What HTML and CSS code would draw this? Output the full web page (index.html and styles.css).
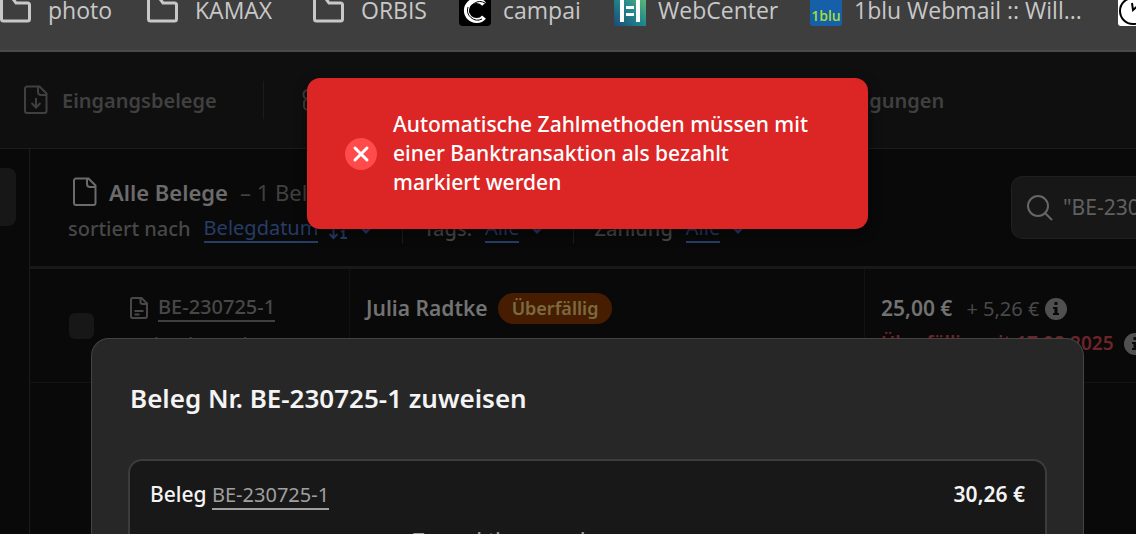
FILE: index.html
```html
<!DOCTYPE html>
<html lang="de">
  <head>
    <meta charset="UTF-8" />
    <meta name="viewport" content="width=device-width, initial-scale=1.0" />
    <title>Alle Belege</title>
    <link rel="stylesheet" href="styles.css">
  </head>
  <body>
    <nav class="bookmarks">
      <a class="bookmark" href="#">
        <svg class="folder" viewBox="0 0 32 28"><path d="M1.5 1.5V23a2 2 0 0 0 2 2h24a2 2 0 0 0 2-2V9a2 2 0 0 0-2-2H16l-4-5.5z" /></svg>
        photo
      </a>
      <a class="bookmark" href="#">
        <svg class="folder" viewBox="0 0 32 28"><path d="M1.5 1.5V23a2 2 0 0 0 2 2h24a2 2 0 0 0 2-2V9a2 2 0 0 0-2-2H16l-4-5.5z" /></svg>
        KAMAX
      </a>
      <a class="bookmark" href="#">
        <svg class="folder" viewBox="0 0 32 28"><path d="M1.5 1.5V23a2 2 0 0 0 2 2h24a2 2 0 0 0 2-2V9a2 2 0 0 0-2-2H16l-4-5.5z" /></svg>
        ORBIS
      </a>
      <a class="bookmark site" href="#">
        <svg class="favicon" viewBox="0 0 32 32">
          <rect width="32" height="32" rx="4" fill="#000" />
          <path d="M25 10a10 10 0 1 0 0 13" fill="none" stroke="#fff" stroke-width="5" />
          <path d="M26 9a10 10 0 0 0-15 10M9 13a10 10 0 0 0 14 12" fill="none" stroke="#000" stroke-width="1" />
        </svg>
        campai
      </a>
      <a class="bookmark site" href="#">
        <svg class="favicon" viewBox="0 0 32 32">
          <defs>
            <linearGradient id="teal" x1="0" y1="1" x2="1" y2="0">
              <stop offset="0" stop-color="#1d4a78" />
              <stop offset="0.5" stop-color="#20888c" />
              <stop offset="1" stop-color="#6cc070" />
            </linearGradient>
          </defs>
          <rect width="32" height="32" fill="url(#teal)" />
          <path d="M6 4h4v24H6zM22 4h4v24h-4zM12 12h8v3h-8zM12 19h8v3h-8z" fill="#fff" />
        </svg>
        WebCenter
      </a>
      <a class="bookmark site" href="#">
        <span class="favicon blu">1blu</span>
        1blu Webmail :: Will...
      </a>
      <a class="bookmark site" href="#" aria-label="Uhr">
        <svg class="favicon" viewBox="0 0 32 32">
          <rect width="32" height="32" rx="3" fill="#fff" />
          <circle cx="15" cy="17" r="13" fill="none" stroke="#000" stroke-width="2" />
          <path d="M14 9l1 7 7-6" fill="none" stroke="#000" stroke-width="2" />
        </svg>
      </a>
    </nav>

    <div class="app">
      <nav class="tabs">
        <a class="tab" href="#">
          <svg class="doc" viewBox="0 0 24 30"><path d="M3 1.5h12.5l7 7V26a2 2 0 0 1-2 2H3a2 2 0 0 1-2-2V3.5a2 2 0 0 1 2-2zM14 1.5V7a3 3 0 0 0 3 3h5.5M12 13v9M7.500 18l4.5 4.5 4.5-4.5" /></svg>
          Eingangsbelege
        </a>
        <a class="tab" href="#">
          <svg class="doc" viewBox="0 0 24 30"><path d="M6 5h12a4 4 0 0 1 0 9H6a4 4 0 0 1 0-9zM6 14a4 4 0 0 0-4 4v3a4 4 0 0 0 4 4h12a4 4 0 0 0 4-4v-3" /></svg>
          Ausgangsbelege
        </a>
        <a class="tab wide" href="#">Bescheinigungen</a>
      </nav>

      <div class="content">
        <aside class="sidebar">
          <div class="sidebar-item"></div>
        </aside>

        <main class="main">
          <header class="list-header">
            <div class="list-info">
              <h1 class="list-title">
                <svg class="doc" viewBox="0 0 24 30"><path d="M3 1.5h12.5l7 7V26a2 2 0 0 1-2 2H3a2 2 0 0 1-2-2V3.5a2 2 0 0 1 2-2zM14 1.5V7a3 3 0 0 0 3 3h5.5" /></svg>
                <span>Alle Belege</span>
                <span class="count">– 1 Beleg</span>
              </h1>
              <div class="filters">
                <div class="filter">
                  sortiert nach
                  <a class="filter-link" href="#">Belegdatum</a>
                  <svg class="sort-icon" viewBox="0 0 20 24"><path d="M5.5 6v15M1.5 17l4 4 4-4M13 15l2.5-1.5V21M12.5 21H19" /></svg>
                  <svg class="chevron" viewBox="0 0 16 14"><path d="M3 5l5 5 5-5" /></svg>
                </div>
                <div class="filter">
                  Tags:
                  <a class="filter-link" href="#">Alle</a>
                  <svg class="chevron" viewBox="0 0 16 14"><path d="M3 5l5 5 5-5" /></svg>
                </div>
                <div class="filter">
                  Zahlung
                  <a class="filter-link" href="#">Alle</a>
                  <svg class="chevron" viewBox="0 0 16 14"><path d="M3 5l5 5 5-5" /></svg>
                </div>
              </div>
            </div>
            <label class="search">
              <svg class="search-icon" viewBox="0 0 28 28"><circle cx="12" cy="12" r="10" /><path d="M19 19l7 7" /></svg>
              <input class="search-input" type="text" aria-label="Suche" value="&quot;BE-230725-1&quot;" />
            </label>
          </header>

          <div class="row">
            <div class="cell cell-doc">
              <input class="check" type="checkbox" aria-label="Beleg auswählen" />
              <div class="doc-info">
                <div class="line">
                  <svg class="doc-small" viewBox="0 0 18 22"><path d="M2.5 1h9l5.5 5.5V19a2 2 0 0 1-2 2H2.5A1.5 1.5 0 0 1 1 19.5v-17A1.5 1.5 0 0 1 2.5 1zM10.5 1v4a2 2 0 0 0 2 2H17M4.5 14h9M4.5 17.5h5" /></svg>
                  <a class="doc-link" href="#">BE-230725-1</a>
                </div>
                <div class="line sub">Rebuchung bar</div>
              </div>
            </div>
            <div class="cell cell-name">
              <div class="line">
                <strong>Julia Radtke</strong>
                <span class="badge">Überfällig</span>
              </div>
              <div class="line sub">zugewiesen an Vorstand, neue Fälligkeit</div>
            </div>
            <div class="cell cell-amount">
              <div class="line">
                <strong>25,00 €</strong>
                <span class="fee">+ 5,26 €
                  <svg class="info" viewBox="0 0 22 22"><circle cx="11" cy="11" r="11" /><path d="M9.5 4h3v3h-3zM8 9h4.5v6H14v2H8v-2h1.5v-4H8z" /></svg>
                </span>
              </div>
              <div class="line overdue">
                Überfällig seit 17.08.2025
                <svg class="info" viewBox="0 0 22 22"><circle cx="11" cy="11" r="11" /><path d="M9.5 4h3v3h-3zM8 9h4.5v6H14v2H8v-2h1.5v-4H8z" /></svg>
              </div>
            </div>
          </div>
        </main>
      </div>
    </div>

    <section class="modal" role="dialog" aria-labelledby="modalTitle">
      <h2 class="modal-title" id="modalTitle">Beleg Nr. BE-230725-1 zuweisen</h2>
      <div class="card">
        <div class="card-head">
          <span>Beleg <a class="card-link" href="#">BE-230725-1</a></span>
          <strong>30,26 €</strong>
        </div>
        <p class="card-note">Transaktion zuordnen</p>
      </div>
    </section>

    <div class="toast" role="alert">
      <svg class="toast-icon" viewBox="0 0 32 32"><circle cx="16" cy="16" r="16" /><path d="M10 10l12 12M22 10L10 22" /></svg>
      <p>Automatische Zahlmethoden müssen mit einer Banktransaktion als bezahlt markiert werden</p>
    </div>
  </body>
</html>
```
FILE: styles.css
```css
* {
  box-sizing: border-box;
  margin: 0;
  padding: 0;
}
html,
body {
  height: 100%;
}
body {
  position: relative;
  display: flex;
  flex-direction: column;
  overflow: hidden;
  background-color: #090909;
  color: #484848;
  font-family: "Noto Sans", "Open Sans", sans-serif;
  font-size: 21px;
  line-height: 29px;
}
a {
  color: inherit;
  text-decoration: none;
}
svg {
  flex: none;
  fill: none;
  stroke: currentColor;
  stroke-width: 2;
}

/* bookmarks bar */
.bookmarks {
  display: grid;
  grid-template-columns: 147px 166px 146px 155px 196px 308px 32px;
  height: 52px;
  overflow: hidden;
  background-color: #3e3e3e;
  border-bottom: 2px solid #4a4a4a;
  color: #c8c8c8;
  font-family: "Open Sans", sans-serif;
  font-size: 23px;
  line-height: 32px;
}
.bookmark {
  display: flex;
  align-items: center;
  gap: 16px;
  height: 20px;
  white-space: nowrap;
}
.site {
  gap: 12px;
}
.folder {
  width: 32px;
  height: 28px;
  stroke-width: 3;
}
.favicon {
  width: 32px;
  height: 32px;
  stroke: none;
}
.blu {
  display: flex;
  flex: none;
  align-items: flex-end;
  justify-content: center;
  background-color: #1560a8;
  border-radius: 3px;
  color: #a6dc3a;
  font-size: 14px;
  font-weight: 600;
  line-height: 20px;
}

/* top navigation */
.app {
  display: flex;
  flex: 1;
  flex-direction: column;
}
.tabs {
  display: flex;
  align-items: center;
  height: 97px;
  padding-left: 24px;
  background-color: #0f0f0f;
  border-bottom: 1px solid #1c1c1c;
  color: #404040;
  font-size: 20px;
  font-weight: 600;
}
.tab {
  display: flex;
  align-items: center;
  gap: 14px;
  height: 38px;
  padding-right: 46px;
  margin-right: 38px;
  border-right: 1px solid #1c1c1c;
}
.wide {
  flex: 1;
  border: 0;
  padding-left: 190px;
}
.doc {
  width: 24px;
  height: 30px;
}

/* list */
.content {
  display: flex;
  flex: 1;
}
.sidebar {
  width: 30px;
  padding-top: 19px;
  border-right: 1px solid #1b1b1b;
}
.sidebar-item {
  width: 16px;
  height: 58px;
  background-color: #171717;
  border-radius: 0 8px 8px 0;
}
.main {
  flex: 1;
  min-width: 0;
}
.list-header {
  display: flex;
  justify-content: space-between;
  height: 120px;
  padding: 27px 0 0 38px;
  border-bottom: 3px solid #191919;
}
.list-title {
  display: flex;
  align-items: center;
  gap: 12px;
  height: 32px;
  padding-left: 5px;
  color: #6b6b6b;
  font-size: 22px;
  font-weight: 600;
}
.count {
  color: #404040;
  font-weight: 400;
}
.filters {
  display: flex;
  padding-top: 6px;
  font-size: 20px;
  font-weight: 500;
}
.filter {
  display: flex;
  align-items: center;
  gap: 10px;
  padding-right: 28px;
  margin-right: 20px;
  border-right: 1px solid #1c1c1c;
}
.filter:last-child {
  border: 0;
}
.filter-link {
  margin-left: 3px;
  border-bottom: 2px solid #263d66;
  color: #263d66;
  font-weight: 400;
  line-height: 27px;
}
.sort-icon {
  width: 20px;
  height: 24px;
  color: #263d66;
}
.chevron {
  width: 16px;
  height: 14px;
  color: #263d66;
  stroke-width: 3;
}
.search {
  display: flex;
  align-items: center;
  gap: 9px;
  width: 125px;
  height: 63px;
  padding-left: 14px;
  background-color: #171717;
  border: 1px solid #202020;
  border-right: 0;
  border-radius: 12px 0 0 12px;
  color: #666666;
}
.search-icon {
  width: 28px;
  height: 28px;
}
.search-input {
  flex: 1;
  min-width: 0;
  background: none;
  border: 0;
  outline: 0;
  color: #606060;
  font: inherit;
}

.row {
  display: grid;
  grid-template-columns: 320px 515px 1fr;
  height: 114px;
  border-bottom: 1px solid #131313;
}
.cell {
  padding: 23px 16px 0;
  border-right: 1px solid #121212;
  overflow: hidden;
  white-space: nowrap;
}
.cell-amount {
  border: 0;
  padding-right: 0;
}
.cell-doc {
  display: flex;
  align-items: center;
  gap: 16px;
  padding: 0 0 0 39px;
}
.check {
  appearance: none;
  width: 25px;
  height: 26px;
  background-color: #171717;
  border-radius: 6px;
}
.doc-info {
  align-self: flex-start;
  padding: 22px 0 0 20px;
}
.line {
  display: flex;
  align-items: center;
  gap: 10px;
  height: 33px;
}
.line strong {
  color: #727272;
  font-weight: 600;
}
.sub {
  margin-top: 4px;
  color: #404040;
  font-size: 20px;
}
.doc-small {
  width: 18px;
  height: 22px;
}
.doc-link {
  border-bottom: 2px solid #404040;
  font-size: 20px;
  font-weight: 500;
  line-height: 27px;
}
.badge {
  padding: 0 14px;
  background-color: #461d00;
  border-radius: 16px;
  color: #7c6a40;
  font-size: 18px;
  font-weight: 600;
  line-height: 31px;
}
.fee {
  display: flex;
  align-items: center;
  gap: 6px;
  padding-left: 4px;
  font-size: 20px;
}
.info {
  width: 22px;
  height: 22px;
  fill: #505050;
  stroke: none;
}
.info path {
  fill: #090909;
}
.overdue {
  margin-top: 2px;
  color: #6c2529;
  font-size: 19px;
  font-weight: 600;
}

/* assign dialog */
.modal {
  position: absolute;
  top: 338px;
  right: 52px;
  bottom: 0;
  left: 91px;
  display: flex;
  flex-direction: column;
  padding: 41px 36px 0;
  overflow: hidden;
  background-color: #272727;
  border: 1px solid #444444;
  border-bottom: 0;
  border-radius: 18px 18px 0 0;
  color: #f4f4f4;
}
.modal-title {
  padding-left: 2px;
  font-size: 26px;
  font-weight: 600;
  line-height: 36px;
}
.card {
  flex: 1;
  margin-top: 43px;
  padding: 19px 20px 0;
  background-color: #181818;
  border: 2px solid #3c3c3c;
  border-bottom: 0;
  border-radius: 14px 14px 0 0;
  font-weight: 500;
}
.card-head {
  display: flex;
  justify-content: space-between;
}
.card-head strong {
  font-weight: 600;
}
.card-link {
  border-bottom: 2px solid #a0a0a0;
  color: #a0a0a0;
  font-size: 20px;
  font-weight: 400;
}
.card-note {
  padding: 16px 140px 0 0;
  color: #a0a0a0;
  font-size: 20px;
  text-align: center;
}

/* error message */
.toast {
  position: absolute;
  top: 78px;
  left: 307px;
  display: flex;
  align-items: center;
  gap: 16px;
  width: 561px;
  padding: 32px 54px 32px 38px;
  background-color: #dc2626;
  border-radius: 13px;
  box-shadow: 0 4px 12px rgba(0, 0, 0, 0.5);
  color: #ffffff;
  font-weight: 500;
}
.toast-icon {
  width: 32px;
  height: 32px;
  stroke-linecap: round;
  stroke-width: 3;
}
.toast-icon circle {
  fill: #ff4b4b;
  stroke: none;
}
```
